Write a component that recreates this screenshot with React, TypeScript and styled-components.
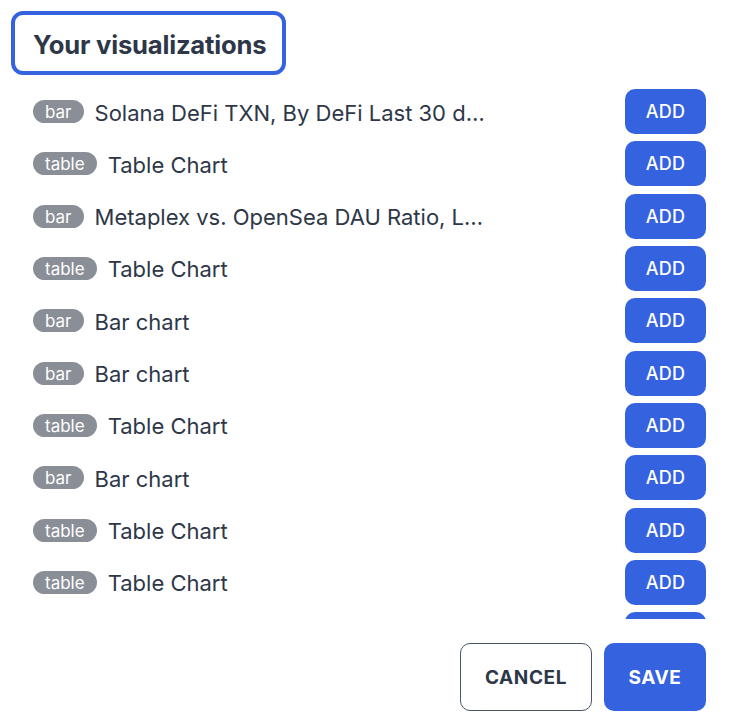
import React from "react";
import styled, { createGlobalStyle } from "styled-components";

const GlobalStyle = createGlobalStyle`
  html, body {
    margin: 0;
    padding: 0;
    background: #fff;
  }
  body {
    font-family: Inter, "Noto Sans", "Liberation Sans", sans-serif;
    color: #2d3748;
  }
`;

const Page = styled.div`
  width: 732px;
  height: 728px;
  box-sizing: border-box;
  padding: 11px 26px 0 11px;
  display: flex;
  flex-direction: column;
`;

const TitleBox = styled.div`
  align-self: flex-start;
  border: 4px solid #3563e0;
  border-radius: 12px;
  padding: 2px 16px 0 18px;
  height: 54px;
  display: flex;
  align-items: center;
`;

const Title = styled.h2`
  margin: 0;
  font-size: 25.6px;
  font-weight: 700;
  letter-spacing: -0.2px;
  color: #2d3748;
`;

const List = styled.div`
  margin-top: 14px;
  padding-left: 22px;
  height: 530px;
  overflow-y: auto;
  scrollbar-width: none;
  &::-webkit-scrollbar {
    display: none;
  }
`;

const Row = styled.div`
  display: flex;
  align-items: center;
  height: 45px;
  margin-bottom: 7.33px;
`;

const Badge = styled.span`
  flex-shrink: 0;
  background: #8a8e97;
  color: #fff;
  border-radius: 12px;
  height: 23px;
  box-sizing: border-box;
  padding: 1px 12px 0;
  font-size: 17px;
  line-height: 22px;
  margin-right: 11px;
`;

const Name = styled.span`
  font-size: 22px;
  color: #2d3748;
  white-space: nowrap;
  overflow: hidden;
  text-overflow: ellipsis;
  max-width: 393px;
  padding-top: 2px;
`;

const Spacer = styled.div`
  flex: 1;
`;

const Button = styled.button<{ $variant?: "solid" | "outline" }>`
  font-family: inherit;
  cursor: pointer;
  border-radius: 10px;
  box-sizing: border-box;
  background: ${(p) => (p.$variant === "outline" ? "#fff" : "#3563e0")};
  color: ${(p) => (p.$variant === "outline" ? "#2d3748" : "#fff")};
  border: ${(p) =>
    p.$variant === "outline" ? "1.5px solid #4a5568" : "none"};
`;

const AddButton = styled(Button)`
  width: 81px;
  height: 45px;
  font-size: 18px;
  font-weight: 500;
  letter-spacing: 0.3px;
`;

const Footer = styled.div`
  margin-top: 24px;
  display: flex;
  justify-content: flex-end;
  gap: 12px;
`;

const FooterButton = styled(Button)<{ $w: number }>`
  width: ${(p) => p.$w}px;
  height: 68px;
  font-size: 19px;
  font-weight: 700;
  letter-spacing: 0.6px;
`;

type Viz = { kind: "bar" | "table"; name: string };

const items: Viz[] = [
  { kind: "bar", name: "Solana DeFi TXN, By DeFi Last 30 days" },
  { kind: "table", name: "Table Chart" },
  { kind: "bar", name: "Metaplex vs. OpenSea DAU Ratio, Last 30 days" },
  { kind: "table", name: "Table Chart" },
  { kind: "bar", name: "Bar chart" },
  { kind: "bar", name: "Bar chart" },
  { kind: "table", name: "Table Chart" },
  { kind: "bar", name: "Bar chart" },
  { kind: "table", name: "Table Chart" },
  { kind: "table", name: "Table Chart" },
  { kind: "bar", name: "Bar chart" },
];

export default function App() {
  return (
    <>
      <GlobalStyle />
      <Page>
        <TitleBox>
          <Title>Your visualizations</Title>
        </TitleBox>
        <List>
          {items.map((it, i) => (
            <Row key={i}>
              <Badge>{it.kind}</Badge>
              <Name>{it.name}</Name>
              <Spacer />
              <AddButton>ADD</AddButton>
            </Row>
          ))}
        </List>
        <Footer>
          <FooterButton $variant="outline" $w={132}>
            CANCEL
          </FooterButton>
          <FooterButton $w={102}>SAVE</FooterButton>
        </Footer>
      </Page>
    </>
  );
}
